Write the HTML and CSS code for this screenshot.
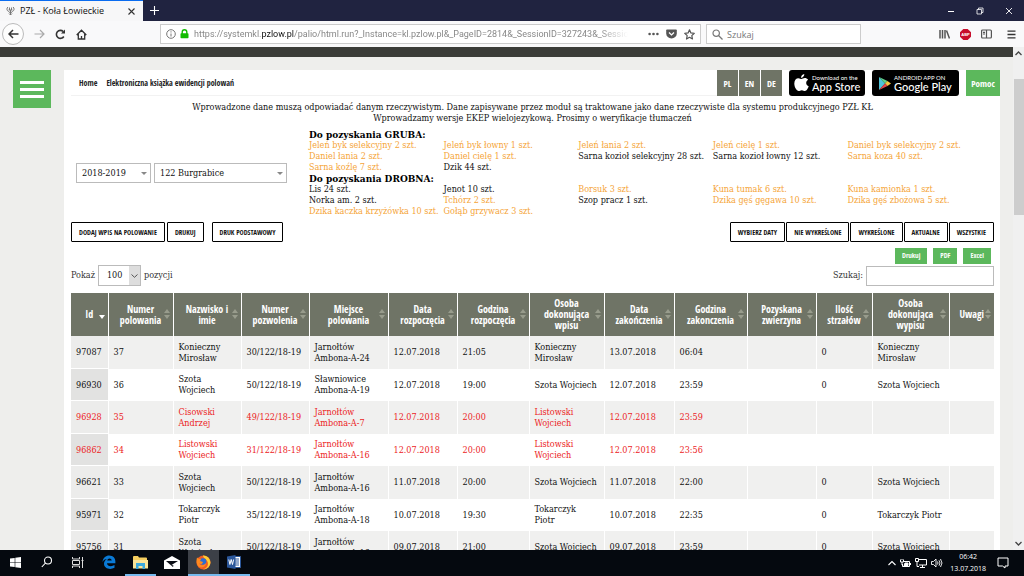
FILE: index.html
```html
<!DOCTYPE html>
<html lang="pl">
<head>
<meta charset="utf-8">
<title>PZŁ - Koła Łowieckie</title>
<link rel="stylesheet" href="styles.css">
</head>
<body>
<div class="titlebar">
  <div class="tab">
    <svg class="tab-icon" width="9" height="10" viewBox="0 0 18 20" fill="none" stroke="#777" stroke-width="2"><path d="M4 2C1 4 1 9 5 11l4 3 4-3c4-2 4-7 1-9M7 3v5M11 3v5M5 8h8M9 8v10M6 15l3 3 3-3"/></svg>
    <span class="tab-title">PZŁ - Koła Łowieckie</span>
    <button class="icon-btn" aria-label="Zamknij kartę"><svg width="7" height="7" viewBox="0 0 7 7" stroke="#333" stroke-width="1.1"><path d="M.5.5l6 6M6.500.500l-6 6"/></svg></button>
  </div>
  <button class="icon-btn new-tab" aria-label="Nowa karta"><svg width="9" height="9" viewBox="0 0 9 9" stroke="#fff" stroke-width="1.1"><path d="M4.500 0v9M0 4.500h9"/></svg></button>
  <div class="window-controls">
    <button class="icon-btn" aria-label="Minimalizuj"><svg width="8" height="8" viewBox="0 0 8 8" stroke="#fff"><path d="M1 4.500h6"/></svg></button>
    <button class="icon-btn" aria-label="Przywróć"><svg width="8" height="8" viewBox="0 0 8 8" stroke="#fff" stroke-width=".8" fill="none"><path d="M1 2.500h4.500V7H1zM2.500 2.500V1H7v4.500H5.500"/></svg></button>
    <button class="icon-btn" aria-label="Zamknij"><svg width="8" height="8" viewBox="0 0 8 8" stroke="#fff" stroke-width=".9"><path d="M1 1l6 6M7 1L1 7"/></svg></button>
  </div>
</div>

<div class="toolbar">
  <div class="nav-buttons">
    <button class="icon-btn back" aria-label="Wstecz"><svg width="11" height="10" viewBox="0 0 11 10" stroke="#333" stroke-width="1.500" fill="none"><path d="M10.500 5H1M5 1L1 5l4 4"/></svg></button>
    <button class="icon-btn" aria-label="Dalej"><svg width="11" height="10" viewBox="0 0 11 10" stroke="#aaa" stroke-width="1.200" fill="none"><path d="M.5 5H10M6 1l4 4-4 4"/></svg></button>
    <button class="icon-btn" aria-label="Odśwież"><svg width="11" height="11" viewBox="0 0 11 11" stroke="#333" stroke-width="1.600" fill="none"><path d="M8.800 7.500A4 4 0 1 1 8.200 2.500"/><path d="M10 .5v4H6z" fill="#333" stroke="none"/></svg></button>
    <button class="icon-btn" aria-label="Strona startowa"><svg width="11" height="11" viewBox="0 0 11 11" stroke="#333" stroke-width="1.300" fill="none"><path d="M.7 6l4.800-4.800L10.300 6M2.300 5v5h6.400V5M5.500 10V7"/></svg></button>
  </div>
  <div class="url-bar">
    <svg width="10" height="10" viewBox="0 0 10 10" stroke="#777" fill="none"><circle cx="5" cy="5" r="4.300"/><path d="M5 4.500v3M5 2.300v1.200"/></svg>
    <svg width="9" height="10" viewBox="0 0 9 10"><path d="M2.200 5V3a2.300 2.300 0 0 1 4.600 0v2" fill="none" stroke="#12bc00" stroke-width="1.400"/><rect x=".5" y="4.300" width="8" height="5" rx=".8" fill="#12bc00"/></svg>
    <div class="url">https://systemkl.<b>pzlow.pl</b>/palio/html.run?_Instance=kl.pzlow.pl&amp;_PageID=2814&amp;_SessionID=327243&amp;_Session</div>
    <svg width="11" height="4" viewBox="0 0 11 4" fill="#555"><circle cx="1.600" cy="2" r="1.300"/><circle cx="5.500" cy="2" r="1.300"/><circle cx="9.400" cy="2" r="1.300"/></svg>
    <svg class="pocket" width="11" height="10" viewBox="0 0 11 10"><path d="M1 .5h9q.8 0 .8.800V4.500a5.300 5 0 0 1-10.600 0V1.300Q.2.500 1 .5z" fill="#555"/><path d="M3 3.500l2.500 2.400L8 3.500" stroke="#fff" stroke-width="1.300" fill="none"/></svg>
    <svg width="11" height="11" viewBox="0 0 11 11" stroke="#555" stroke-width="1.200" fill="none" stroke-linejoin="round"><path d="M5.500.800l1.400 3.100 3.400.4-2.500 2.300.7 3.400-3-1.700-3 1.700.7-3.400L.7 4.300l3.400-.4z"/></svg>
  </div>
  <label class="browser-search">
    <svg width="11" height="11" viewBox="0 0 11 11" stroke="#777" stroke-width="1.200" fill="none"><circle cx="4.200" cy="4.200" r="3.200"/><path d="M6.500 6.500l4 4"/></svg>
    <input type="text" placeholder="Szukaj" aria-label="Szukaj w sieci">
  </label>
  <div class="tool-icons">
    <svg width="11" height="10" viewBox="0 0 11 10" stroke="#555" stroke-width="1.500"><path d="M1 1v8.500M3.500 1v8.500M6 1v8.500M7.500 1.500l3 8"/></svg>
    <svg width="11" height="11" viewBox="0 0 11 11"><path d="M3.300 0h4.400L11 3.300v4.400L7.700 11H3.300L0 7.700V3.300z" fill="#c70d2c"/><text x="5.500" y="7.200" font-family="Liberation Sans" font-size="4" font-weight="bold" fill="#fff" text-anchor="middle">ABP</text></svg>
    <svg width="11" height="10" viewBox="0 0 11 10" stroke="#555" stroke-width="1.200" fill="none"><rect x=".6" y="1" width="9.800" height="8" rx="1"/><path d="M5.500 1v8M2 3.300h2M2 5h2"/></svg>
    <svg class="menu-icon" width="9" height="9" viewBox="0 0 9 9" stroke="#333" stroke-width="1.300"><path d="M.5 1.200h8M.5 4.500h8M.5 7.800h8"/></svg>
  </div>
</div>

<div class="viewport">
  <div class="page">
    <div class="strip"></div>
    <div class="layout">
      <button class="hamburger" aria-label="Menu"><span></span><span></span><span></span></button>
      <main class="card">
        <header class="card-head">
          <nav class="crumbs"><a href="#">Home</a><a href="#">Elektroniczna książka ewidencji polowań</a></nav>
          <div class="langs"><button>PL</button><button>EN</button><button>DE</button></div>
          <a class="store apple" href="#">
            <svg width="15" height="18" viewBox="0 0 15 18" fill="#fff"><path d="M10.300 0c.1 1.900-1.300 3.800-3.200 3.900C6.900 2.100 8.500.200 10.300 0zM7.500 5c.8 0 1.800-.9 3.300-.9 1.200 0 2.500.6 3.300 1.700-2.800 1.600-2.400 5.400.6 6.500-.6 1.700-2 4.700-3.700 4.700-1.200 0-1.700-.8-3.200-.8s-2 .8-3.100.8C2.600 17 .3 13 .3 9.500c0-3.400 2-5.300 4.100-5.300 1.400 0 2.300.8 3.100.8z"/></svg>
            <span class="store-text"><small>Download on the</small><strong>App Store</strong></span>
          </a>
          <a class="store google" href="#">
            <svg width="13" height="15" viewBox="0 0 13 15"><path d="M1 1v13l6-6.500z" fill="#4fc3d9"/><path d="M1 1l8.500 4L7 7.500z" fill="#5fd08a"/><path d="M9.500 5L13 7.500 9.500 10 7 7.500z" fill="#f5c542"/><path d="M1 14l6-6.500L9.500 10z" fill="#e2474b"/></svg>
            <span class="store-text"><small>ANDROID APP ON</small><strong>Google Play</strong></span>
          </a>
          <button class="help">Pomoc</button>
        </header>

        <p class="intro">Wprowadzone dane muszą odpowiadać danym rzeczywistym. Dane zapisywane przez moduł są traktowane jako dane rzeczywiste dla systemu produkcyjnego PZŁ KŁ<br>Wprowadzamy wersje EKEP wielojezykową. Prosimy o weryfikacje tłumaczeń</p>

        <section class="summary">
          <div class="filters">
            <span class="pick season"><select aria-label="Sezon"><option>2018-2019</option></select></span>
            <span class="pick district"><select aria-label="Obwód"><option>122 Burgrabice</option></select></span>
          </div>
          <div class="quota">
            <h2>Do pozyskania GRUBA:</h2>
            <ul>
              <li>Jeleń byk selekcyjny 2 szt.</li><li>Jeleń byk łowny 1 szt.</li><li>Jeleń łania 2 szt.</li><li>Jeleń cielę 1 szt.</li><li>Daniel byk selekcyjny 2 szt.</li>
              <li>Daniel łania 2 szt.</li><li>Daniel cielę 1 szt.</li><li class="open">Sarna kozioł selekcyjny 28 szt.</li><li class="open">Sarna kozioł łowny 12 szt.</li><li>Sarna koza 40 szt.</li>
              <li>Sarna koźlę 7 szt.</li><li class="open">Dzik 44 szt.</li>
            </ul>
            <h2>Do pozyskania DROBNA:</h2>
            <ul>
              <li class="open">Lis 24 szt.</li><li class="open">Jenot 10 szt.</li><li>Borsuk 3 szt.</li><li>Kuna tumak 6 szt.</li><li>Kuna kamionka 1 szt.</li>
              <li class="open">Norka am. 2 szt.</li><li>Tchórz 2 szt.</li><li class="open">Szop pracz 1 szt.</li><li>Dzika gęś gęgawa 10 szt.</li><li>Dzika gęś zbożowa 5 szt.</li>
              <li>Dzika kaczka krzyżówka 10 szt.</li><li>Gołąb grzywacz 3 szt.</li>
            </ul>
          </div>
        </section>

        <div class="actions">
          <button>DODAJ WPIS NA POLOWANIE</button>
          <button>DRUKUJ</button>
          <button class="apart">DRUK PODSTAWOWY</button>
          <div class="views"><button>WYBIERZ DATY</button><button>NIE WYKREŚLONE</button><button>WYKREŚLONE</button><button>AKTUALNE</button><button>WSZYSTKIE</button></div>
        </div>

        <div class="exports"><button>Drukuj</button><button>PDF</button><button>Excel</button></div>

        <div class="table-tools">
          <label class="length">Pokaż <span class="count"><select><option>100</option></select><svg width="7" height="4" viewBox="0 0 7 4" fill="none" stroke="#555"><path d="M.5.500l3 2.800 3-2.800"/></svg></span> pozycji</label>
          <label class="find">Szukaj: <input type="text"></label>
        </div>

        <table class="hunts">
          <colgroup><col class="w-id"><col class="w-num"><col class="w-name"><col class="w-name"><col class="w-place"><col class="w-date"><col class="w-hour"><col class="w-person"><col class="w-end"><col class="w-endhour"><col class="w-date"><col class="w-shots"><col class="w-out"><col class="w-notes"></colgroup>
          <thead><tr>
            <th class="sorted">Id</th><th>Numer<br>polowania</th><th>Nazwisko i<br>imie</th><th>Numer<br>pozwolenia</th><th>Miejsce<br>polowania</th><th>Data<br>rozpoczęcia</th><th>Godzina<br>rozpoczęcia</th><th>Osoba<br>dokonująca<br>wpisu</th><th>Data<br>zakończenia</th><th>Godzina<br>zakonczenia</th><th>Pozyskana<br>zwierzyna</th><th>Ilość<br>strzałów</th><th>Osoba<br>dokonująca<br>wypisu</th><th>Uwagi</th>
          </tr></thead>
          <tbody>
            <tr><td>97087</td><td>37</td><td>Konieczny<br>Mirosław</td><td>30/122/18-19</td><td>Jarnołtów<br>Ambona-A-24</td><td>12.07.2018</td><td>21:05</td><td>Konieczny<br>Mirosław</td><td>13.07.2018</td><td>06:04</td><td></td><td>0</td><td>Konieczny<br>Mirosław</td><td></td></tr>
            <tr><td>96930</td><td>36</td><td>Szota<br>Wojciech</td><td>50/122/18-19</td><td>Sławniowice<br>Ambona-A-19</td><td>12.07.2018</td><td>19:00</td><td>Szota Wojciech</td><td>12.07.2018</td><td>23:59</td><td></td><td>0</td><td>Szota Wojciech</td><td></td></tr>
            <tr class="active"><td>96928</td><td>35</td><td>Cisowski<br>Andrzej</td><td>49/122/18-19</td><td>Jarnołtów<br>Ambona-A-7</td><td>12.07.2018</td><td>20:00</td><td>Listowski<br>Wojciech</td><td>12.07.2018</td><td>23:59</td><td></td><td></td><td></td><td></td></tr>
            <tr class="active"><td>96862</td><td>34</td><td>Listowski<br>Wojciech</td><td>31/122/18-19</td><td>Jarnołtów<br>Ambona-A-16</td><td>12.07.2018</td><td>20:00</td><td>Listowski<br>Wojciech</td><td>12.07.2018</td><td>23:56</td><td></td><td></td><td></td><td></td></tr>
            <tr><td>96621</td><td>33</td><td>Szota<br>Wojciech</td><td>50/122/18-19</td><td>Jarnołtów<br>Ambona-A-16</td><td>11.07.2018</td><td>20:00</td><td>Szota Wojciech</td><td>11.07.2018</td><td>22:00</td><td></td><td>0</td><td>Szota Wojciech</td><td></td></tr>
            <tr><td>95971</td><td>32</td><td>Tokarczyk<br>Piotr</td><td>35/122/18-19</td><td>Jarnołtów<br>Ambona-A-18</td><td>10.07.2018</td><td>19:30</td><td>Tokarczyk<br>Piotr</td><td>10.07.2018</td><td>22:35</td><td></td><td>0</td><td>Tokarczyk Piotr</td><td></td></tr>
            <tr><td>95756</td><td>31</td><td>Szota<br>Wojciech</td><td>50/122/18-19</td><td>Jarnołtów<br>Ambona-A-16</td><td>09.07.2018</td><td>21:00</td><td>Szota Wojciech</td><td>09.07.2018</td><td>23:59</td><td></td><td>0</td><td>Szota Wojciech</td><td></td></tr>
          </tbody>
        </table>
      </main>
    </div>
  </div>
  <div class="scrollbar">
    <svg width="7" height="5" viewBox="0 0 7 5" fill="none" stroke="#444" stroke-width="1.300"><path d="M.5 4l3-3 3 3"/></svg>
    <div class="thumb"></div>
    <svg class="down" width="7" height="5" viewBox="0 0 7 5" fill="none" stroke="#444" stroke-width="1.300"><path d="M.5 1l3 3 3-3"/></svg>
  </div>
</div>

<footer class="taskbar">
  <div class="apps">
    <button aria-label="Start"><svg width="11" height="11" viewBox="0 0 11 11" fill="#fff"><path d="M0 1.600l4.700-.7v4.300H0zM5.300.800L11 0v5.200H5.300zM0 5.800h4.700v4.300L0 9.400zM5.300 5.800H11V11l-5.700-.8z"/></svg></button>
    <button aria-label="Wyszukaj"><svg width="12" height="12" viewBox="0 0 12 12" fill="none" stroke="#fff" stroke-width="1.100"><circle cx="7" cy="4.500" r="3.500"/><path d="M4.500 7L.8 11"/></svg></button>
    <button aria-label="Widok zadań"><svg width="12" height="11" viewBox="0 0 12 11" fill="none" stroke="#ddd"><path d="M.5 0v2h7V0M.5 11V9h7v2M.5 3.500h7v4h-7zM10.500 0v11M9.500 3.500h2"/></svg></button>
    <button aria-label="Edge"><svg width="14" height="14" viewBox="0 0 14 14"><path d="M.5 7C1 2.800 3.800.500 7.200.500c4 0 6.200 2.900 6.200 6.200v1.500H5c.1 3.200 4.600 3.700 7.500 1.900v2.700C8 15.200 2 13.500 2 8.700c0-2.100 1.200-3.800 3-4.700C3 4 1.400 5.200.5 7zM5.200 5.600h4.500C9.600 2.700 5.600 2.600 5.200 5.600z" fill="#0a7ad6"/></svg></button>
    <button class="running" aria-label="Eksplorator plików"><svg width="15" height="13" viewBox="0 0 15 13"><path d="M0 1q0-1 1-1h4l1 1.500h7q1 0 1 1V12H0z" fill="#f6cf60"/><path d="M0 4h15v8.500H0z" fill="#fbe498"/><path d="M3 7h9v6H9.500V10h-4v3H3z" fill="#3da9dc"/></svg></button>
    <button aria-label="Poczta"><svg width="16" height="13" viewBox="0 0 16 13"><path d="M0 4.500L8 0l8 4.500V13H0z" fill="#fff"/><path d="M2 5h12L7.500 9l2 .5-.5 1.500z" fill="#0a0d15"/></svg></button>
    <button class="running current" aria-label="Firefox"><svg width="15" height="15" viewBox="0 0 15 15"><circle cx="7.500" cy="7.500" r="7" fill="#f25c22"/><path d="M7 .5a7 7 0 0 1 7.400 6.500c.3 4.500-4 7.900-8 7.200 5-.5 7-5 4.500-8.500C10 3.500 7 3 7 .5z" fill="#ffcf33"/><circle cx="7" cy="6.500" r="3.300" fill="#2b6fd1"/><path d="M1 2.500c1.500 1 2 1.500 4 1.500L4 6l3 1c-1 3-3 2-4 1 1 3 5 3 7 0 0 4-5 6-8 3C.2 8.500.3 5 1 2.500z" fill="#ff8a1f"/></svg></button>
    <button class="running" aria-label="Word"><svg width="14" height="14" viewBox="0 0 14 14"><path d="M7 1.500h6.500v11H7z" fill="#fff" stroke="#2b579a"/><path d="M8 4h4M8 6h4M8 8h4M8 10h4" stroke="#2b579a"/><path d="M0 1.500L8.500 0v14L0 12.500z" fill="#2b579a"/><path d="M1.800 4.500l1.100 5 1.300-5 1.300 5 1.100-5" fill="none" stroke="#fff"/></svg></button>
  </div>
  <div class="tray">
    <svg width="8" height="6" viewBox="0 0 8 6" fill="none" stroke="#fff" stroke-width="1.100"><path d="M.5 5L4 1.500 7.500 5"/></svg>
    <svg width="11" height="9" viewBox="0 0 11 9" fill="none" stroke="#fff"><path d="M4 2.500h5.500v5H2.500V5M10.500 4v2"/><path d="M5 4h3v2.500H4z" fill="#fff"/><path d="M.5 1v2h3V1M2 3v3M1 0v1M3 0v1"/></svg>
    <svg width="12" height="10" viewBox="0 0 12 10" fill="none" stroke="#fff"><path d="M4 1.500h7.500v5.500H4M5 9.500h5M7.500 7v2.500M.5.500h3v3h-3zM2 3.500v5h2"/></svg>
    <svg width="12" height="10" viewBox="0 0 12 10" fill="none" stroke="#fff" stroke-width=".9"><path d="M.5 3.500h2L5 1v8L2.500 6.500h-2zM6.500 3.500q1 1.500 0 3M8 2.300q2 2.700 0 5.400M9.500 1q3 4 0 8"/></svg>
    <time>06:42<br>13.07.2018</time>
    <svg class="notify" width="12" height="12" viewBox="0 0 12 12" fill="none" stroke="#fff"><path d="M1 1h10v8H8v2L5.500 9H1z"/></svg>
  </div>
</footer>
</body>
</html>
```

FILE: styles.css
```css
:root {
  --narrow: "Open Sans Condensed", "Roboto Condensed", "Liberation Sans Narrow", "Liberation Sans", sans-serif;
}
* { box-sizing: border-box; }
body {
  margin: 0;
  height: 100vh;
  display: flex;
  flex-direction: column;
  overflow: hidden;
  background: #eeeeec;
  color: #111;
  font: 9px/11px "DejaVu Serif Condensed", "DejaVu Serif", serif;
}
button, input, select { font: inherit; color: inherit; }
button { cursor: pointer; }
svg { display: block; flex: none; }
.icon-btn { border: 0; background: none; padding: 0; display: flex; align-items: center; justify-content: center; }

/* Browser window */
.titlebar { flex: none; height: 21px; display: flex; background: #202340; font: 9px/12px "Open Sans", sans-serif; }
.tab { width: 143px; display: flex; align-items: center; gap: 5px; padding: 0 8px 0 6px; background: #f7f7f8; border-top: 1px solid #0a6cf0; color: #111; }
.tab-title { flex: 1; white-space: nowrap; }
.new-tab { width: 22px; }
.window-controls { margin-left: auto; display: flex; gap: 21px; padding-right: 11px; }
.toolbar { flex: none; height: 26px; display: flex; align-items: center; background: #f9f9fa; font: 9px/13px "Open Sans", sans-serif; }
.nav-buttons { width: 160px; display: flex; gap: 10px; padding-left: 2px; align-items: center; }
.back { width: 22px; height: 22px; border: 1px solid #bbb; border-radius: 50%; background: #fdfdfd; }
.url-bar { flex: 1; min-width: 0; height: 20px; display: flex; align-items: center; gap: 4px; padding: 0 5px; border: 1px solid #ccc; background: #fff; }
.url { flex: 1; min-width: 0; overflow: hidden; white-space: nowrap; color: #888; margin: 0 16px 0 1px; font-family: Roboto, sans-serif; mask-image: linear-gradient(90deg, #000 93%, transparent); }
.url b { font-weight: normal; color: #111; }
.pocket { margin: 0 3px; }
.browser-search { width: 155px; height: 20px; margin-left: 5px; display: flex; align-items: center; gap: 4px; padding: 0 5px; border: 1px solid #ccc; background: #fff; }
.browser-search input { flex: 1; min-width: 0; border: 0; padding: 0; background: none; outline: 0; }
.browser-search input::placeholder { color: #777; }
.tool-icons { width: 163px; display: flex; align-items: center; justify-content: flex-end; gap: 10px; padding-right: 8px; }
.menu-icon { margin-left: 5px; }

/* Page area */
.viewport { flex: 1; min-height: 0; display: flex; }
.page { flex: 1; min-width: 0; overflow: hidden; }
.strip { height: 10px; background: #3b3c38; }
.layout { display: flex; align-items: flex-start; gap: 13px; padding: 13px 13px 0; }
.hamburger { flex: none; width: 38px; height: 38px; border: 0; padding: 0 7px; background: #5cb85c; display: flex; flex-direction: column; justify-content: center; gap: 4px; }
.hamburger span { height: 3px; background: #fff; }
.card { flex: 1; min-width: 0; background: #fff; padding-left: 7px; }
.scrollbar { flex: none; width: 11px; background: #f0f0f0; display: flex; flex-direction: column; align-items: center; padding: 4px 0; }
.thumb { width: 10px; height: 136px; margin-top: 23px; background: #cdcdcd; }
.down { margin-top: auto; }

/* Card header */
.card-head { display: flex; align-items: stretch; height: 26px; font-family: var(--narrow); font-size: 9px; }
.crumbs { flex: 1; display: flex; gap: 9px; align-items: center; padding-left: 8px; border-bottom: 1px solid #f2f2f2; font-size: 8px; }
.crumbs a { color: #222; text-decoration: none; }
.langs { display: flex; gap: 1px; margin-right: 7px; }
.langs button { width: 21px; border: 0; padding: 0; background: #6f7466; color: #fff; }
.store { display: flex; align-items: center; gap: 3px; margin-right: 7px; padding-left: 5px; border-radius: 3px; background: #000; color: #fff; text-decoration: none; font-family: Lato, sans-serif; }
.apple { width: 76px; }
.google { width: 87px; padding-left: 6px; }
.store-text { display: flex; flex-direction: column; white-space: nowrap; }
.store-text small { font-size: 6px; line-height: 7px; }
.store-text strong { font-size: 11px; line-height: 12px; font-weight: 500; }
.help { width: 34px; border: 0; padding: 0; background: #5cb85c; color: #fff; }

.intro { margin: 6px 0 0; padding-right: 6px; text-align: center; }

/* Quotas */
.summary { display: flex; margin-top: 5px; }
.filters { width: 238px; display: flex; gap: 3px; align-items: center; padding-left: 5px; }
.pick { position: relative; }
.pick select { appearance: none; width: 100%; height: 20px; border: 1px solid #bbb; padding: 0 5px; background: #fff; }
.pick::after { content: ""; position: absolute; right: 4px; top: 9px; border: 3px solid transparent; border-top: 3px solid #888; border-bottom: 0; }
.season { width: 75px; }
.district { width: 133px; }
.quota { flex: 1; padding-right: 18px; }
.quota h2 { margin: 0; font-size: 10px; line-height: 11px; color: #000; }
.quota ul { list-style: none; margin: 0; padding: 0; display: grid; grid-template-columns: repeat(5, 1fr); white-space: nowrap; color: #f5a437; }
.quota .open { color: #111; }

/* Action buttons */
.actions { display: flex; gap: 2px; margin-top: 5px; padding-right: 6px; font-family: var(--narrow); font-size: 7px; }
.actions button { height: 20px; padding: 0 7px; border: 1px solid #000; border-radius: 1px; background: #fff; white-space: nowrap; }
.actions .apart { margin-left: 6px; }
.views { margin-left: auto; display: flex; gap: 1px; }
.exports { display: flex; justify-content: flex-end; gap: 6px; margin-top: 6px; padding-right: 9px; font-family: var(--narrow); font-size: 7px; }
.exports button { height: 16px; padding: 0 7px; border: 0; background: #5cb85c; color: #fff; line-height: 12px; }
.table-tools { display: flex; justify-content: space-between; align-items: center; padding: 1px 6px 7px 0; }
.length, .find { display: flex; align-items: center; gap: 3px; color: #333; }
.find input { width: 128px; height: 20px; border: 1px solid #bbb; padding: 0 4px; background: #fff; }
.count { width: 43px; height: 21px; display: flex; position: relative; color: #111; }
.count select { appearance: none; width: 100%; border: 1px solid #bbb; padding: 0 8px; background: linear-gradient(90deg, #fff 30px, #ddd 30px); }
.count svg { position: absolute; right: 3px; top: 9px; }

/* Records */
.hunts { width: calc(100% - 6px); table-layout: fixed; border-collapse: collapse; }
.w-id { width: 37px; } .w-num { width: 65px; } .w-name { width: 68px; } .w-place { width: 79px; }
.w-date { width: 69px; } .w-hour { width: 72px; } .w-person { width: 75px; } .w-end { width: 70px; }
.w-endhour { width: 73px; } .w-shots { width: 56px; } .w-out { width: 77px; } .w-notes { width: 45px; }
.hunts th, .hunts td { border-right: 1px solid #fff; white-space: nowrap; }
.hunts th:last-child, .hunts td:last-child { border-right: 0; }
.hunts th { position: relative; height: 43px; padding: 0; background: #6f7466; color: #fff; font: 10px/11px var(--narrow); }
.hunts th::before, .hunts th::after { content: ""; position: absolute; right: 3px; border: 3px solid transparent; }
.hunts th::before { top: 16px; border-top: 0; border-bottom: 4px solid #989c8c; }
.hunts th::after { top: 22px; border-bottom: 0; border-top: 4px solid #989c8c; }
.hunts .sorted::before { display: none; }
.hunts .sorted::after { border-top-color: #fff; }
.hunts td { height: 33px; padding: 0 5px; }
.hunts tr:nth-child(even) td { height: 32px; }
.hunts tbody tr:nth-child(odd) { background: #f0f0ef; }
.hunts tbody td:first-child { background: #e2e2e1; box-shadow: inset 0 -1px #fff; }
.hunts tbody tr:nth-child(odd) td:first-child { background: #ececeb; }
.hunts .active { color: #ec1c24; }

/* Taskbar */
.taskbar { flex: none; height: 26px; display: flex; justify-content: space-between; background: #05090f; color: #fff; }
.apps { display: grid; grid-template-columns: repeat(8, 1fr); width: 250px; }
.apps button { display: flex; align-items: center; justify-content: center; border: 0; border-bottom: 2px solid transparent; padding: 0; background: none; }
.apps .running { border-bottom-color: #76b9ed; }
.apps .current { background: #3c4047; }
.tray { display: flex; align-items: center; gap: 4px; padding-right: 15px; font: 7px/12px "Open Sans", sans-serif; text-align: center; }
.tray time { margin: 0 3px; }
.notify { margin-left: 4px; }
```
